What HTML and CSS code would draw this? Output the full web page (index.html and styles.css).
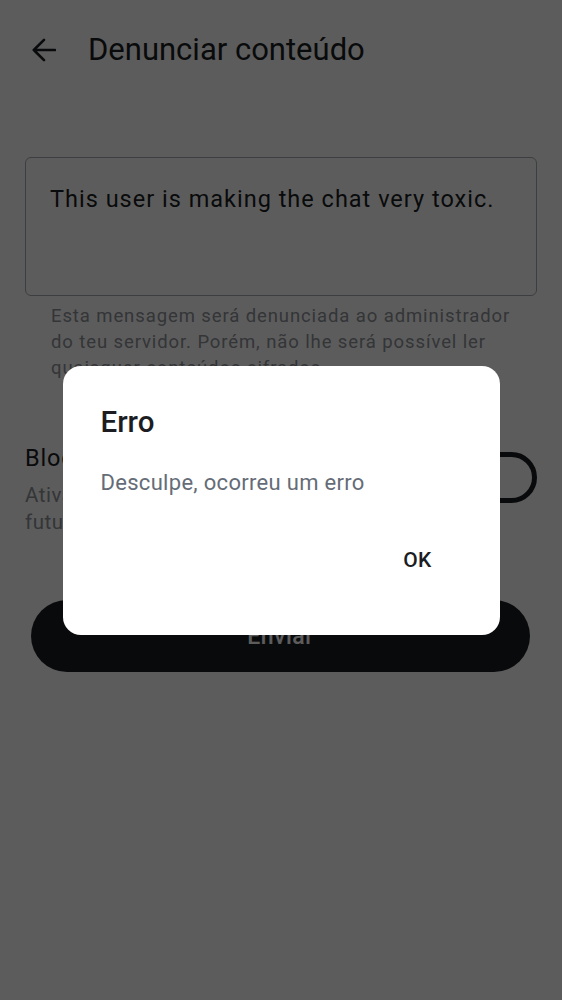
FILE: index.html
```html
<!DOCTYPE html>
<html lang="pt">
<head>
<meta charset="utf-8">
<link rel="stylesheet" href="styles.css">
</head>
<body>
<div class="page">
  <header class="topbar">
    <svg class="back" viewBox="0 0 24 24" width="24" height="24"><path d="M23 12H1.8M12 1.8L1.8 12L12 22.2" fill="none" stroke="#1b1d22" stroke-width="2.6" stroke-linecap="round" stroke-linejoin="round"/></svg>
    <h1 class="title">Denunciar conteúdo</h1>
  </header>
  <main class="content">
    <div class="field">This user is making the chat very toxic.</div>
    <p class="helper">Esta mensagem será denunciada ao administrador do teu servidor. Porém, não lhe será possível ler quaisquer conteúdos cifrados.</p>
    <div class="block-row">
      <div class="block-text">
        <div class="block-title">Bloquear utilizador</div>
        <div class="block-desc">Ativar para esconder mensagens atuais e futuras deste utilizador</div>
      </div>
      <div class="switch"><span class="knob"></span></div>
    </div>
    <button class="send">Enviar</button>
  </main>
</div>
<div class="scrim">
  <div class="dialog">
    <div class="dlg-title">Erro</div>
    <div class="dlg-msg">Desculpe, ocorreu um erro</div>
    <div class="dlg-actions"><span class="ok">OK</span></div>
  </div>
</div>
</body>
</html>
```

FILE: styles.css
```css
* { box-sizing: border-box; }
html, body { margin: 0; padding: 0; }
body {
  background: #ffffff;
  font-family: Roboto, "Liberation Sans", sans-serif;
  color: #1b1d22;
  width: 562px;
  height: 1000px;
  overflow: hidden;
}
.page { width: 562px; }
.topbar {
  height: 100px;
  display: flex;
  align-items: center;
  padding-left: 32px;
}
.back { display: block; flex: none; }
.title {
  margin: 0 0 0 32px;
  font-size: 31px;
  font-weight: 400;
  line-height: 36px;
  color: #1b1d22;
}
.content {
  padding: 57px 25px 0 25px;
  display: flex;
  flex-direction: column;
}
.field {
  height: 139px;
  border: 1.5px solid #a6abb3;
  border-radius: 6px;
  padding: 26px 0 0 24px;
  font-size: 23.5px;
  line-height: 30px;
  letter-spacing: 1px;
  color: #1b1d22;
}
.helper {
  margin: 7px 0 0 0;
  padding: 0 26px;
  font-size: 18.5px;
  line-height: 26px;
  letter-spacing: 0.9px;
  color: #8f939a;
}
.block-row {
  margin-top: 61px;
  display: flex;
  align-items: flex-start;
  gap: 20px;
}
.block-text { flex: 1; }
.block-title {
  font-size: 23.5px;
  line-height: 32px;
  letter-spacing: 0.8px;
  color: #1b1d22;
}
.block-desc {
  margin-top: 8px;
  font-size: 20.5px;
  line-height: 27px;
  letter-spacing: 0.5px;
  color: #8f939a;
}
.switch {
  flex: none;
  width: 88px;
  height: 51px;
  margin-top: 10px;
  border: 5px solid #1b1d22;
  border-radius: 26px;
  position: relative;
}
.knob {
  position: absolute;
  left: 6px;
  top: 6px;
  width: 29px;
  height: 29px;
  border-radius: 50%;
  background: #1b1d22;
}
.send {
  margin: 64px 7px 0 6px;
  height: 72px;
  border: none;
  border-radius: 36px;
  background: #1b1d22;
  color: #ffffff;
  font-family: Roboto, "Liberation Sans", sans-serif;
  font-size: 23px;
  font-weight: 500;
  letter-spacing: 0.5px;
}
.scrim {
  position: fixed;
  inset: 0;
  background: rgba(0, 0, 0, 0.64);
  display: flex;
  align-items: center;
  justify-content: center;
}
.dialog {
  width: 437px;
  height: 269px;
  background: #ffffff;
  border-radius: 18px;
  padding: 39px 38px 0 38px;
  display: flex;
  flex-direction: column;
}
.dlg-title {
  font-size: 29.5px;
  line-height: 34px;
  font-weight: 500;
  color: #1b1d22;
}
.dlg-msg {
  margin-top: 30px;
  font-size: 22px;
  line-height: 28px;
  letter-spacing: 0.3px;
  color: #656c77;
}
.dlg-actions {
  margin-top: 49px;
  display: flex;
  justify-content: flex-end;
  padding-right: 30px;
}
.ok {
  font-size: 21px;
  line-height: 28px;
  font-weight: 500;
  letter-spacing: 0.3px;
  color: #1b1d22;
}
```
